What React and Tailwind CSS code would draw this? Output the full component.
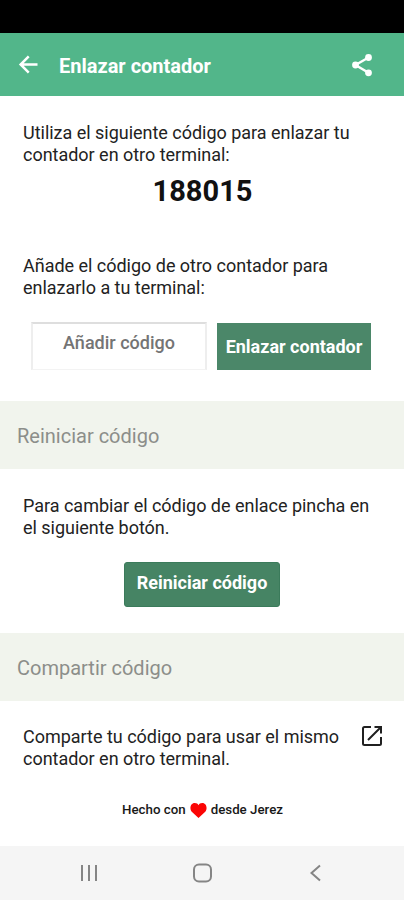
import React from "react";

const SectionTitle = ({ children }) => (
  <h2 className="flex h-[68px] items-center bg-[#f1f4ed] px-[17px] pt-[2px] text-[20px] text-[#8c8e8a]">
    <span className="whitespace-nowrap">{children}</span>
  </h2>
);

const Paragraph = ({ lines }) => (
  <p className="text-[18px] leading-[21.5px] tracking-[-0.02px] text-[#222222]">
    {lines.map((line) => (
      <span key={line} className="block whitespace-nowrap">
        {line}
      </span>
    ))}
  </p>
);

const Header = () => (
  <header className="flex h-[63px] items-center bg-[#52b68a] text-white">
    <button type="button" aria-label="Volver" className="ml-[15px]">
      <svg viewBox="0 0 24 24" className="size-[27px]" fill="none" stroke="currentColor" strokeWidth="2.200">
        <path d="M20 12H5.500M12.200 4.800 5 12l7.200 7.200" />
      </svg>
    </button>
    <h1 className="ml-[17px] flex-1 pt-[3px] whitespace-nowrap text-[20px] font-bold">
      Enlazar contador
    </h1>
    <button type="button" aria-label="Compartir" className="mr-[29px]">
      <svg viewBox="0 0 26 26" className="size-[26px]" fill="currentColor">
        <path d="M19.500 5.500 6.500 13l13 7.800" fill="none" stroke="currentColor" strokeWidth="2.400" />
        <circle cx="19.500" cy="5.500" r="3.400" />
        <circle cx="6.500" cy="13" r="3.400" />
        <circle cx="19.500" cy="20.800" r="3.400" />
      </svg>
    </button>
  </header>
);

const NavBar = () => (
  <nav className="flex h-[54px] items-center bg-[#f5f5f5] text-[#858585]">
    <svg viewBox="0 0 20 20" className="ml-[79px] size-5" fill="none" stroke="currentColor" strokeWidth="2">
      <path d="M3 2v16M10 2v16M17 2v16" />
    </svg>
    <svg viewBox="0 0 20 20" className="ml-[93px] size-5" fill="none" stroke="currentColor" strokeWidth="2">
      <rect x="2" y="1.5" width="17" height="17" rx="5" />
    </svg>
    <svg viewBox="0 0 20 20" className="ml-[94px] size-5" fill="none" stroke="currentColor" strokeWidth="2">
      <path d="M14 2.5 5.500 10 14 17.500" />
    </svg>
  </nav>
);

const App = () => {
  return (
    <div className="flex h-[900px] w-[404px] flex-col overflow-hidden bg-white font-['Roboto',sans-serif]">
      <div className="h-[33px] bg-black" />
      <Header />

      <main className="flex-1">
        <section className="h-[305px] px-[23px] pt-[26px]">
          <Paragraph lines={["Utiliza el siguiente código para enlazar tu", "contador en otro terminal:"]} />
          <div className="mt-[8px] pl-px text-center text-[29px] leading-[36px] font-bold text-[#111111]">
            188015
          </div>
          <div className="mt-[46px]">
            <Paragraph lines={["Añade el código de otro contador para", "enlazarlo a tu terminal:"]} />
          </div>
          <div className="mt-[24px] ml-2 flex">
            <div className="flex h-[48px] w-[176px] justify-center border-t-2 border-r-2 border-b border-l-2 border-t-[#dedede] border-r-[#eeeeee] border-b-[#f3f3f3] border-l-[#eeeeee] pt-[8px] text-[18px] leading-[22px] font-medium whitespace-nowrap text-[#747474]">
              Añadir código
            </div>
            <button type="button" className="mt-px ml-[10px] h-[47px] w-[154px] bg-[#4b8769] text-[18px] font-bold whitespace-nowrap text-white">
              Enlazar contador
            </button>
          </div>
        </section>

        <SectionTitle>Reiniciar código</SectionTitle>
        <section className="h-[164px] px-[23px] pt-[26px]">
          <Paragraph lines={["Para cambiar el código de enlace pincha en", "el siguiente botón."]} />
          <button type="button" className="mx-auto mt-[24px] block h-[45px] w-[156px] rounded-[3px] border border-[#3b7b5b] bg-[#468464] pb-[4px] text-[18px] font-bold whitespace-nowrap text-white">
            Reiniciar código
          </button>
        </section>

        <SectionTitle>Compartir código</SectionTitle>
        <section className="px-[23px] pt-[25px]">
          <div className="flex justify-between">
            <Paragraph lines={["Comparte tu código para usar el mismo", "contador en otro terminal."]} />
            <svg viewBox="0 0 20 20" className="-mr-px size-5" fill="none" stroke="#202020" strokeWidth="2">
              <path d="M9 1H2.500Q1 1 1 2.500v15Q1 19 2.500 19h15q1.500 0 1.500-1.500V11M12.500 1H19v6.500M18.500 1.500 6 14" />
            </svg>
          </div>
          <footer className="mt-[31px] flex items-center justify-center pl-px text-[13.3px] leading-[20px] font-medium whitespace-nowrap text-[#181818]">
            Hecho con
            <svg viewBox="0 0 18 16" className="mx-1 h-[15px] w-[17px]" fill="#fb0505">
              <path d="M9 16 1.800 9.200C-.8 6.500.2 0 5 0c2 0 3.300 1 4 2.300C9.700 1 11 0 13 0c4.800 0 5.800 6.500 3.200 9.200Z" />
            </svg>
            desde Jerez
          </footer>
        </section>
      </main>

      <NavBar />
    </div>
  );
};

export default App;
